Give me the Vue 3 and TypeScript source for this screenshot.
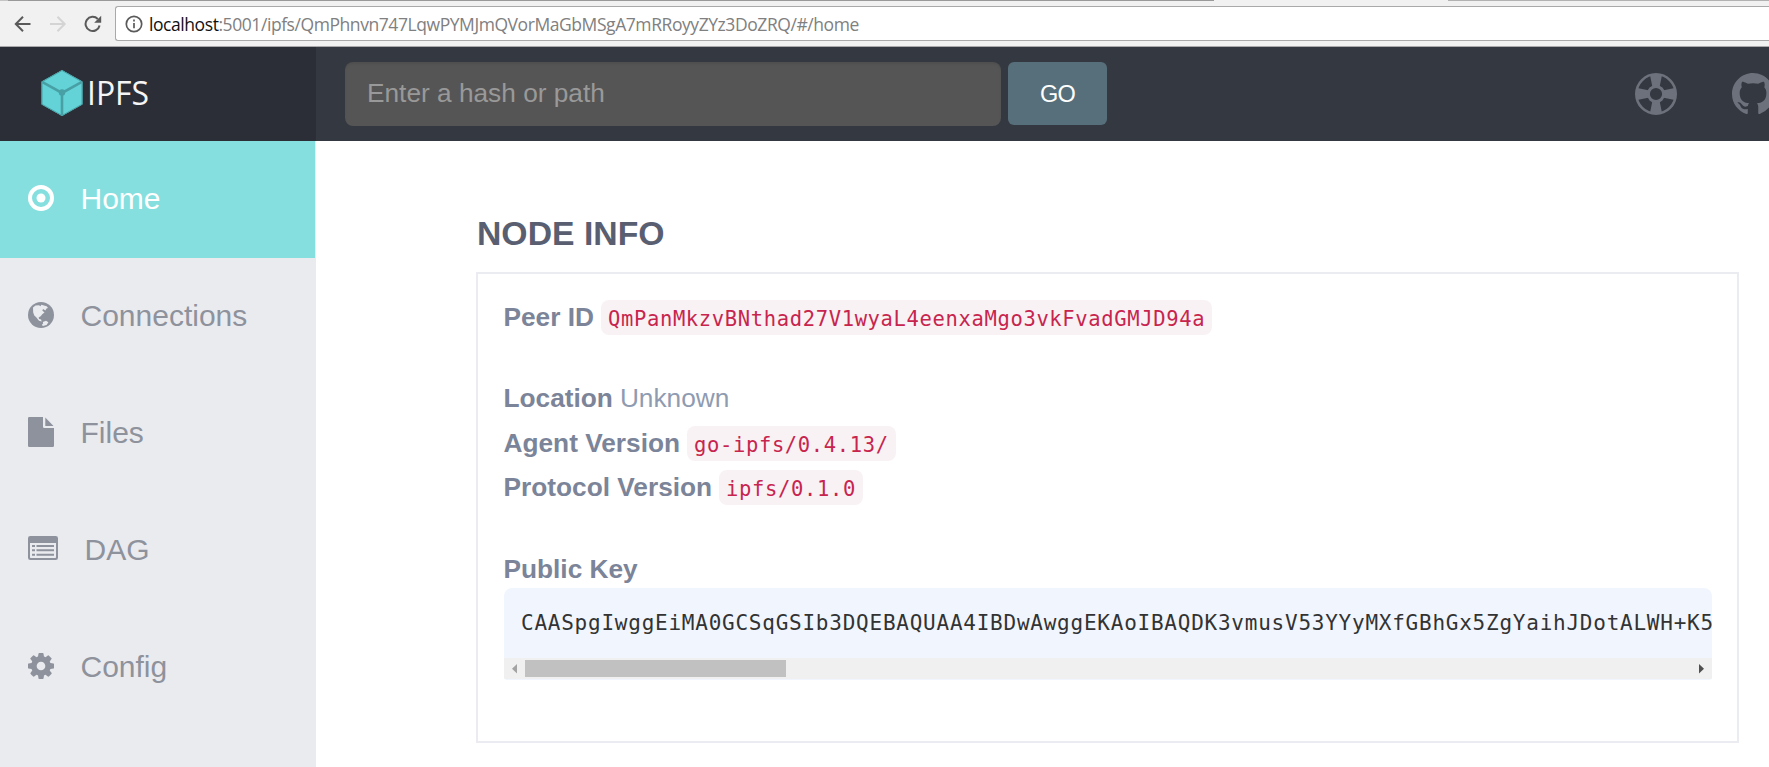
<script setup lang="ts">
interface NavItem {
  label: string
  icon: 'home' | 'globe' | 'file' | 'list' | 'cog'
  active?: boolean
}

const navItems: NavItem[] = [
  { label: 'Home', icon: 'home', active: true },
  { label: 'Connections', icon: 'globe' },
  { label: 'Files', icon: 'file' },
  { label: 'DAG', icon: 'list' },
  { label: 'Config', icon: 'cog' },
]

const host = 'localhost'
const path = ':5001/ipfs/QmPhnvn747LqwPYMJmQVorMaGbMSgA7mRRoyyZYz3DoZRQ/#/home'
const peerId = 'QmPanMkzvBNthad27V1wyaL4eenxaMgo3vkFvadGMJD94a'
const publicKey =
  'CAASpgIwggEiMA0GCSqGSIb3DQEBAQUAA4IBDwAwggEKAoIBAQDK3vmusV53YYyMXfGBhGx5ZgYaihJDotALWH+K5'
</script>

<template>
  <div class="window">
    <div class="tab-edge">
      <span class="edge-left"></span>
      <span class="edge-gap"></span>
      <span class="edge-right"></span>
    </div>
    <div class="toolbar">
      <div class="controls">
        <svg class="ctl" viewBox="0 0 18 18"><path d="M16.5 9H2.2M9 1.8 1.8 9 9 16.2" /></svg>
        <svg class="ctl off" viewBox="0 0 18 18"><path d="M1 9h14.3M8.5 1.8 15.7 9l-7.2 7.2" /></svg>
        <svg class="ctl" viewBox="0 0 18 18">
          <path d="M15.6 10.5A7.1 7.1 0 1 1 13.8 4" />
          <path class="solid" d="M17.2 .8v7h-7z" />
        </svg>
      </div>
      <div class="omnibox">
        <svg class="info" viewBox="0 0 18 18">
          <circle cx="9" cy="9" r="7.7" />
          <path d="M9 8v5.2M9 4.6v2" />
        </svg>
        <span class="url"><span class="host">{{ host }}</span>{{ path }}</span>
      </div>
    </div>

    <header class="topbar">
      <div class="brand">
        <svg class="logo" viewBox="0 0 112 48">
          <path class="cube" d="M21 1 41.5 12.5v23L21 47 .5 35.500v-23z" />
          <path class="cube-edge" d="M1.500 13.200 21 24l19.500-10.800M21 24v22.500" />
          <path class="cube-edge outline" d="M21 1.500 41 12.800v22.500L21 46.500 1 35.300V12.800z" />
          <circle class="hub" cx="21" cy="23.500" r="3.200" />
          <text x="46" y="35.500" textLength="62" lengthAdjust="spacingAndGlyphs">IPFS</text>
        </svg>
      </div>
      <div class="search">
        <div class="field">Enter a hash or path</div>
        <button class="go" type="button">GO</button>
      </div>
      <div class="links">
        <svg class="link-icon" viewBox="0 0 42 42">
          <circle cx="21" cy="21" r="19.700" fill="none" stroke="currentColor" stroke-width="2.600" />
          <circle cx="21" cy="21" r="7.600" fill="none" stroke="currentColor" stroke-width="3" />
          <path d="M14.800 1h12.400l-2.700 13.500h-7zM14.800 41h12.400l-2.700-13.500h-7zM1 14.800v12.400l13.500-2.700v-7zM41 14.800v12.400l-13.500-2.700v-7z" />
        </svg>
        <svg class="link-icon" viewBox="0 0 16 16">
          <path
            d="M8 0C3.580 0 0 3.580 0 8c0 3.540 2.290 6.530 5.470 7.590.4.07.55-.17.55-.38 0-.19-.01-.82-.01-1.490-2.010.37-2.530-.49-2.690-.94-.09-.23-.48-.94-.82-1.130-.28-.15-.68-.52-.01-.53.63-.01 1.080.58 1.230.82.72 1.210 1.870.87 2.330.66.07-.52.28-.87.51-1.070-1.780-.2-3.640-.89-3.640-3.950 0-.87.31-1.590.82-2.150-.08-.2-.36-1.020.08-2.120 0 0 .67-.21 2.200.82.64-.18 1.320-.27 2-.27.68 0 1.360.09 2 .27 1.530-1.040 2.200-.82 2.200-.82.44 1.100.16 1.920.08 2.120.51.56.82 1.270.82 2.150 0 3.070-1.870 3.750-3.650 3.950.29.25.54.73.54 1.480 0 1.070-.01 1.930-.01 2.200 0 .21.15.46.55.38A8.012 8.012 0 0 0 16 8c0-4.420-3.580-8-8-8z"
          />
        </svg>
      </div>
    </header>

    <div class="body">
      <nav class="sidebar">
        <a v-for="item in navItems" :key="item.label" class="nav-item" :class="{ active: item.active }">
          <svg v-if="item.icon === 'home'" class="nav-icon" viewBox="0 0 26 26">
            <circle cx="13" cy="13" r="11" fill="none" stroke="currentColor" stroke-width="4" />
            <circle cx="13" cy="13" r="4.500" />
          </svg>
          <svg v-else-if="item.icon === 'globe'" class="nav-icon" viewBox="0 0 26 26">
            <circle cx="13" cy="13" r="13" />
            <path
              class="land"
              d="M5 5.500 7.500 3.500l3.500-.3 1.500 1 .8-1.400 2.700.7 2.700.8 1.300 1.700-1.500.4-1.200 2-2.200-1.300-.8 1.500 2.200 1.800-2 1.500-1.900 2.400-2 1.200.500 1.500 2 .5.500 2-2.600-.8-2.800-3.500L6.300 13.500 5.200 10.500z"
            />
            <path class="land" d="M14.800 20l3.200-1.200 2.400 1.400-1.800 2.700-3.800 1.100-.9-1.200 1.300-1.200z" />
          </svg>
          <svg v-else-if="item.icon === 'file'" class="nav-icon file" viewBox="0 0 26 30">
            <path d="M1.300 0H15v9.700q0 1.300 1.300 1.300H26v17.700q0 1.300-1.300 1.300H1.300Q0 30 0 28.700V1.300Q0 0 1.300 0zM17.300.5 25.500 9h-8.200z" />
          </svg>
          <svg v-else-if="item.icon === 'list'" class="nav-icon list" viewBox="0 0 30 24">
            <path
              fill-rule="evenodd"
              d="M2.300 0h25.400Q30 0 30 2.300v19.400q0 2.300-2.300 2.300H2.300Q0 24 0 21.700V2.300Q0 0 2.300 0zM2 7v14.300q0 .7.700.7h24.600q.7 0 .7-.7V7zM4 9h3v2H4zM8.500 9H26v2H8.500zM4 13.300h3v2H4zM8.500 13.300H26v2H8.500zM4 17.700h3v2H4zM8.500 17.700H26v2H8.500z"
            />
          </svg>
          <svg v-else class="nav-icon" viewBox="128 128 1536 1536">
            <path
              d="M1152 896q0-106-75-181t-181-75-181 75-75 181 75 181 181 75 181-75 75-181zm512-109v222q0 12-8 23t-20 13l-185 28q-19 54-39 91 35 50 107 138 10 12 10 25t-9 23q-27 37-99 108t-94 71q-12 0-26-9l-138-108q-44 23-91 38-16 136-29 186-7 28-36 28h-222q-14 0-24.500-8.500t-11.500-21.500l-28-184q-49-16-90-37l-141 107q-10 9-25 9-14 0-25-11-126-114-165-168-7-10-7-23 0-12 8-23 15-21 51-66.500t54-70.500q-27-50-41-99l-183-27q-13-2-21-12.500t-8-23.500v-222q0-12 8-23t19-13l186-28q14-46 39-92-40-57-107-138-10-12-10-24 0-10 9-23 26-36 98.500-107.500t94.500-71.500q13 0 26 10l138 107q44-23 91-38 16-136 29-186 7-28 36-28h222q14 0 24.500 8.500t11.500 21.500l28 184q49 16 90 37l142-107q9-9 24-9 13 0 25 10 129 119 165 170 7 8 7 22 0 12-8 23-15 21-51 66.500t-54 70.500q26 50 41 98l183 28q13 2 21 12.500t8 23.500z"
            />
          </svg>
          <span>{{ item.label }}</span>
        </a>
      </nav>

      <main class="content">
        <h1>NODE INFO</h1>
        <section class="panel">
          <div class="row spaced"><strong>Peer ID</strong><code>{{ peerId }}</code></div>
          <div class="row"><strong>Location</strong><span>Unknown</span></div>
          <div class="row agent"><strong>Agent Version</strong><code>go-ipfs/0.4.13/</code></div>
          <div class="row key-gap"><strong>Protocol Version</strong><code>ipfs/0.1.0</code></div>
          <div class="row key"><strong>Public Key</strong></div>
          <div class="keybox">
            <pre>{{ publicKey }}</pre>
            <div class="scrollbar">
              <svg class="arrow dim" viewBox="0 0 21 21"><path d="M13 6v9.500L8 10.800z" /></svg>
              <div class="track"><div class="thumb"></div></div>
              <svg class="arrow" viewBox="0 0 21 21"><path d="M8 6v9.500l5-4.700z" /></svg>
            </div>
          </div>
        </section>
      </main>
    </div>
  </div>
</template>

<style>
body {
  margin: 0;
  background: #fff;
}
</style>

<style scoped>
.window {
  display: flex;
  flex-direction: column;
  width: 1769px;
  height: 767px;
  overflow: hidden;
  background: #fff;
  font-family: "Liberation Sans", Arial, sans-serif;
}
.window * {
  box-sizing: border-box;
}
svg {
  display: block;
  flex: none;
  fill: currentColor;
}
.tab-edge {
  display: flex;
  flex: none;
  height: 1px;
  background: #f1f1f1;
}
.edge-left {
  width: 1214px;
  border-left: 8px solid #c4c4c4;
  background: #999;
}
.edge-gap {
  width: 234px;
}
.edge-right {
  flex: 1;
  background: #b2b2b2;
}
.toolbar {
  display: flex;
  flex: none;
  height: 46px;
  padding-top: 5px;
  background: #f1f1f1;
  border-bottom: 1px solid #a9a9ab;
}
.controls {
  display: flex;
  gap: 17px;
  width: 115px;
  padding: 9px 0 0 14px;
  color: #5a5a5a;
}
.ctl {
  width: 18px;
  height: 18px;
  fill: none;
  stroke: currentColor;
  stroke-width: 2;
}
.ctl .solid {
  fill: currentColor;
  stroke: none;
}
.ctl.off {
  color: #d4d4d4;
}
.omnibox {
  display: flex;
  flex: 1;
  align-items: center;
  height: 35px;
  padding-left: 9px;
  background: #fff;
  border: 1px solid #a9a9a9;
  border-right: 0;
  border-radius: 3px 0 0 3px;
}
.info {
  width: 18px;
  height: 18px;
  fill: none;
  stroke: #5a5a5a;
  stroke-width: 1.700;
}
.url {
  margin-left: 6px;
  font-family: "Open Sans", "Noto Sans", sans-serif;
  font-size: 17.500px;
  line-height: 30px;
  letter-spacing: -0.430px;
  color: #808080;
  white-space: nowrap;
}
.host {
  color: #111;
}
.topbar {
  display: flex;
  flex: none;
  height: 94px;
  background: #343841;
}
.brand {
  width: 316px;
  padding: 22px 0 0 40.500px;
  background: #2c2e37;
}
.logo {
  width: 112px;
  height: 48px;
}
.cube {
  fill: #63d3d7;
}
.cube-edge {
  fill: none;
  stroke: #48a0a5;
  stroke-width: 2.600;
}
.cube-edge.outline {
  stroke-width: 1;
}
.hub {
  fill: #48a0a5;
}
.logo text {
  fill: #f5f5f5;
  font-family: "Open Sans", sans-serif;
  font-size: 32px;
}
.search {
  display: flex;
  gap: 7px;
  padding: 15px 0 0 29px;
}
.field {
  width: 656px;
  height: 64px;
  padding-left: 22px;
  border-radius: 8px;
  background: #555;
  box-shadow: inset 0 2px 2px rgba(0, 0, 0, 0.080);
  color: #999;
  font-size: 26.250px;
  line-height: 62px;
}
.go {
  width: 99px;
  height: 63px;
  padding: 0;
  border: 0;
  border-radius: 6px;
  background: #576f7b;
  color: #fff;
  font-family: inherit;
  font-size: 23.500px;
  letter-spacing: -0.700px;
  line-height: 62px;
}
.links {
  display: flex;
  gap: 55px;
  width: 134px;
  margin-left: auto;
  padding-top: 26px;
  color: #6d717b;
}
.link-icon {
  width: 42px;
  height: 42px;
}
.body {
  display: flex;
  flex: 1;
  min-height: 0;
}
.sidebar {
  width: 316px;
  flex: none;
  padding-right: 1px;
  background: #eaebef;
}
.nav-item {
  display: flex;
  align-items: center;
  gap: 27px;
  height: 117px;
  padding: 0 0 2px 27.500px;
  color: #8e929c;
  font-size: 30px;
}
.nav-item.active {
  background: #85dfde;
  color: #fff;
}
.nav-icon {
  width: 26px;
  height: 26px;
  margin-bottom: 2px;
}
.nav-icon.file {
  height: 30px;
}
.nav-icon.list {
  width: 30px;
  height: 24px;
  margin-bottom: 4px;
}
.land {
  fill: #eaebef;
}
.content {
  width: 1263px;
  margin-left: 160px;
  padding-top: 73px;
}
h1 {
  margin: 0;
  height: 58px;
  padding-left: 1px;
  color: #595f71;
  font-size: 33.750px;
  line-height: 38px;
}
.panel {
  height: 471px;
  padding: 21px 25px 0 26px;
  border: 2px solid #ebecf1;
}
.row {
  display: flex;
  align-items: center;
  gap: 7px;
  height: 44px;
  margin-left: -0.500px;
  color: #8f9bb1;
  font-size: 26.250px;
  line-height: 44px;
  white-space: nowrap;
}
.row strong {
  color: #7b8498;
}
.row.spaced {
  margin-bottom: 37px;
}
.row.agent {
  margin-top: 1px;
}
.row.key-gap {
  margin-bottom: 41px;
}
.row.key {
  height: 38px;
}
code {
  height: 35px;
  padding: 0 7px;
  border-radius: 8px;
  background: #f9f2f4;
  color: #c7254e;
  font-family: "DejaVu Sans Mono", monospace;
  font-size: 20.500px;
  line-height: 38px;
  letter-spacing: 0.640px;
}
.keybox {
  overflow: hidden;
  height: 92px;
  border-radius: 8px 8px 3px 3px;
  background: #f1f6fe;
}
pre {
  height: 70px;
  margin: 0;
  padding: 17px 0 0 17px;
  color: #333;
  font-family: "DejaVu Sans Mono", monospace;
  font-size: 21px;
  line-height: 36px;
  letter-spacing: 0.760px;
}
.scrollbar {
  display: flex;
  height: 21px;
  background: #f0f0f0;
}
.arrow {
  width: 21px;
  height: 21px;
  color: #505050;
}
.arrow.dim {
  color: #a3a3a3;
}
.track {
  flex: 1;
  padding: 2px 0;
}
.thumb {
  width: 261px;
  height: 17px;
  background: #c1c1c1;
}
</style>
